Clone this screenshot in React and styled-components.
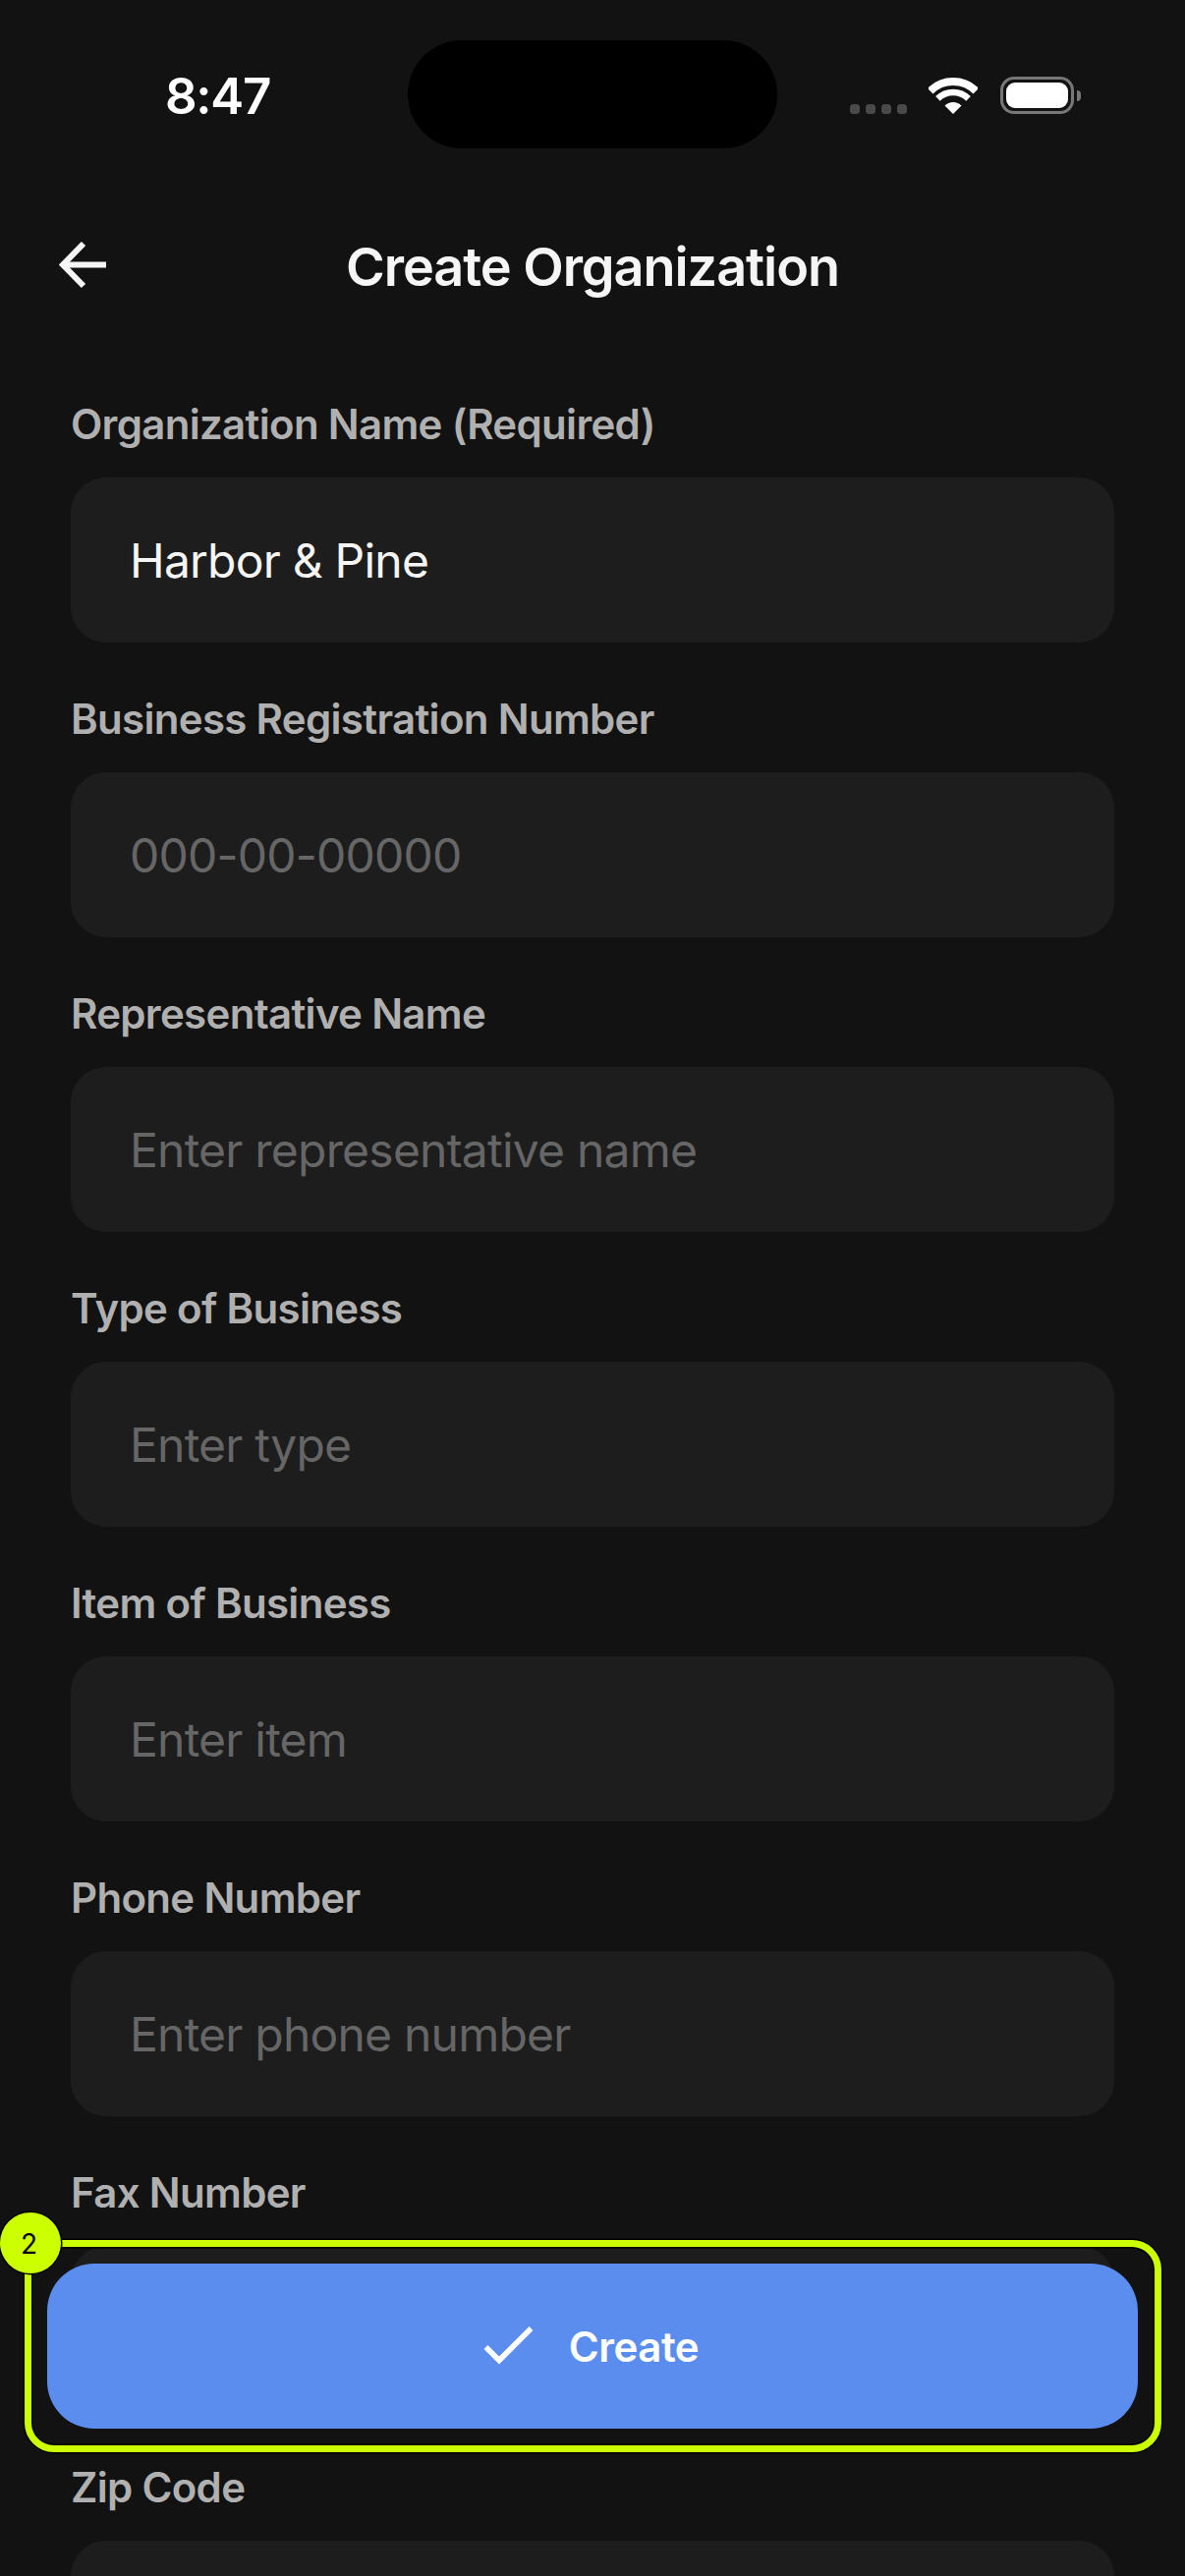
import styled, { createGlobalStyle } from 'styled-components';

const GlobalStyle = createGlobalStyle`
  html, body {
    margin: 0;
    padding: 0;
    background: #121212;
  }

  * {
    box-sizing: border-box;
  }
`;

const Screen = styled.div`
  position: relative;
  width: 1206px;
  height: 2622px;
  overflow: hidden;
  background: #121212;
  font-family: Inter, "Liberation Sans", sans-serif;
`;

const StatusBar = styled.div`
  display: flex;
  align-items: flex-start;
  height: 152px;
  padding: 41px 0 0 168px;
`;

const Time = styled.div`
  width: 247px;
  height: 110px;
  font-size: 51px;
  font-weight: 600;
  line-height: 113px;
  letter-spacing: -1.3px;
  color: #fff;
`;

const Island = styled.div`
  width: 376px;
  height: 110px;
  border-radius: 55px;
  background: #000;
`;

const StatusIcons = styled.div`
  display: flex;
  align-items: flex-end;
  margin: 37px 0 0 74px;
`;

const SignalDots = styled.div`
  display: flex;
  gap: 6px;
  margin-right: 22px;
`;

const SignalDot = styled.span`
  width: 10px;
  height: 10px;
  border-radius: 3.5px;
  background: #4a4a4a;
`;

const WifiIcon = styled.svg`
  display: block;
  width: 50px;
  height: 37px;
  margin-right: 23px;
`;

const Battery = styled.div`
  position: relative;
  width: 75px;
  height: 38px;
  padding: 3px;
  border: 3px solid #777;
  border-radius: 14px;

  &::before {
    content: '';
    display: block;
    height: 100%;
    border-radius: 9px;
    background: #fff;
  }

  &::after {
    content: '';
    position: absolute;
    top: 11px;
    right: -10px;
    width: 4px;
    height: 11px;
    border-radius: 0 4px 4px 0;
    background: #777;
  }
`;

const Header = styled.header`
  display: grid;
  grid-template-columns: 1fr auto 1fr;
  align-items: center;
  height: 108px;
  margin-top: 64px;
  padding: 0 60px;
`;

const BackIcon = styled.svg`
  display: block;
  width: 48px;
  height: 48px;
`;

const Title = styled.h1`
  margin: 0;
  padding-top: 3px;
  font-size: 54px;
  font-weight: 600;
  line-height: 66px;
  letter-spacing: -1.05px;
  color: #f5f5f5;
`;

const Form = styled.div`
  display: flex;
  flex-direction: column;
  gap: 51px;
  padding: 81px 72px 0;
`;

const Field = styled.div`
  display: flex;
  flex-direction: column;
  gap: 27px;
`;

const Label = styled.div`
  font-size: 42px;
  font-weight: 600;
  line-height: 54px;
  letter-spacing: -0.68px;
  color: #b0b0b0;
`;

const Input = styled.div`
  display: flex;
  align-items: center;
  height: 168px;
  padding: 0 60px;
  border-radius: 36px;
  background: #1d1d1d;
  font-size: 48px;
  font-weight: 400;
  letter-spacing: -0.78px;
  color: ${props => props.$filled ? '#f5f5f5' : '#666'};
`;

const Dock = styled.div`
  position: absolute;
  top: 2280px;
  left: 25px;
  display: flex;
  width: 1157px;
  height: 216px;
  padding: 17px 17px 7px 16px;
  border: 7px solid #ccff00;
  border-radius: 30px;
  box-shadow: 0 0 0 1.5px #000, inset 0 0 0 1.5px #000;
`;

const Badge = styled.div`
  position: absolute;
  top: -35px;
  left: -32px;
  display: flex;
  align-items: center;
  justify-content: center;
  width: 62px;
  height: 62px;
  padding: 2px 3px 0 0;
  border-radius: 50%;
  background: #ccff00;
  box-shadow: 0 0 0 1.5px #000;
  font-size: 28px;
  font-weight: 400;
  color: #000;
`;

const CreateButton = styled.button`
  display: flex;
  flex: 1;
  align-items: center;
  justify-content: center;
  gap: 34px;
  height: 168px;
  padding: 0 4px 0 0;
  border: none;
  border-radius: 48px;
  background: #5b8def;
  font-family: inherit;
  font-size: 42px;
  font-weight: 600;
  letter-spacing: -0.5px;
  color: #fff;
`;

const CheckIcon = styled.svg`
  display: block;
  width: 54px;
  height: 42px;
`;

const fields = [
  { label: 'Organization Name (Required)', value: 'Harbor & Pine' },
  { label: 'Business Registration Number', placeholder: '000-00-00000' },
  { label: 'Representative Name', placeholder: 'Enter representative name' },
  { label: 'Type of Business', placeholder: 'Enter type' },
  { label: 'Item of Business', placeholder: 'Enter item' },
  { label: 'Phone Number', placeholder: 'Enter phone number' },
  { label: 'Fax Number' },
  { label: 'Zip Code' },
];

function App() {
  return (
    <Screen>
      <GlobalStyle />

      <StatusBar>
        <Time>8:47</Time>
        <Island />
        <StatusIcons>
          <SignalDots>
            <SignalDot />
            <SignalDot />
            <SignalDot />
            <SignalDot />
          </SignalDots>
          <WifiIcon viewBox="0 0 50 37" fill="none">
            <path d="M1.7 13.7a33 33 0 0 1 46.6 0" stroke="#fff" strokeWidth="8" />
            <path d="M9.4 21.4a22 22 0 0 1 31.2 0" stroke="#fff" strokeWidth="6.5" />
            <path d="M25 37l-8.5-8.5a12 12 0 0 1 17 0z" fill="#fff" />
          </WifiIcon>
          <Battery />
        </StatusIcons>
      </StatusBar>

      <Header>
        <BackIcon viewBox="0 0 48 48" fill="none" stroke="#f5f5f5" strokeWidth="6">
          <path d="M25 2L4 23.5L25 45" />
          <path d="M4 23.5H48" />
        </BackIcon>
        <Title>Create Organization</Title>
      </Header>

      <Form>
        {fields.map(field => (
          <Field key={field.label}>
            <Label>{field.label}</Label>
            <Input $filled={!!field.value}>{field.value || field.placeholder}</Input>
          </Field>
        ))}
      </Form>

      <Dock>
        <Badge>2</Badge>
        <CreateButton>
          <CheckIcon viewBox="0 0 54 42" fill="none" stroke="#fff" strokeWidth="5.5">
            <path d="M3.5 22L17 35.5L49.5 3" />
          </CheckIcon>
          Create
        </CreateButton>
      </Dock>
    </Screen>
  );
}

export default App;
